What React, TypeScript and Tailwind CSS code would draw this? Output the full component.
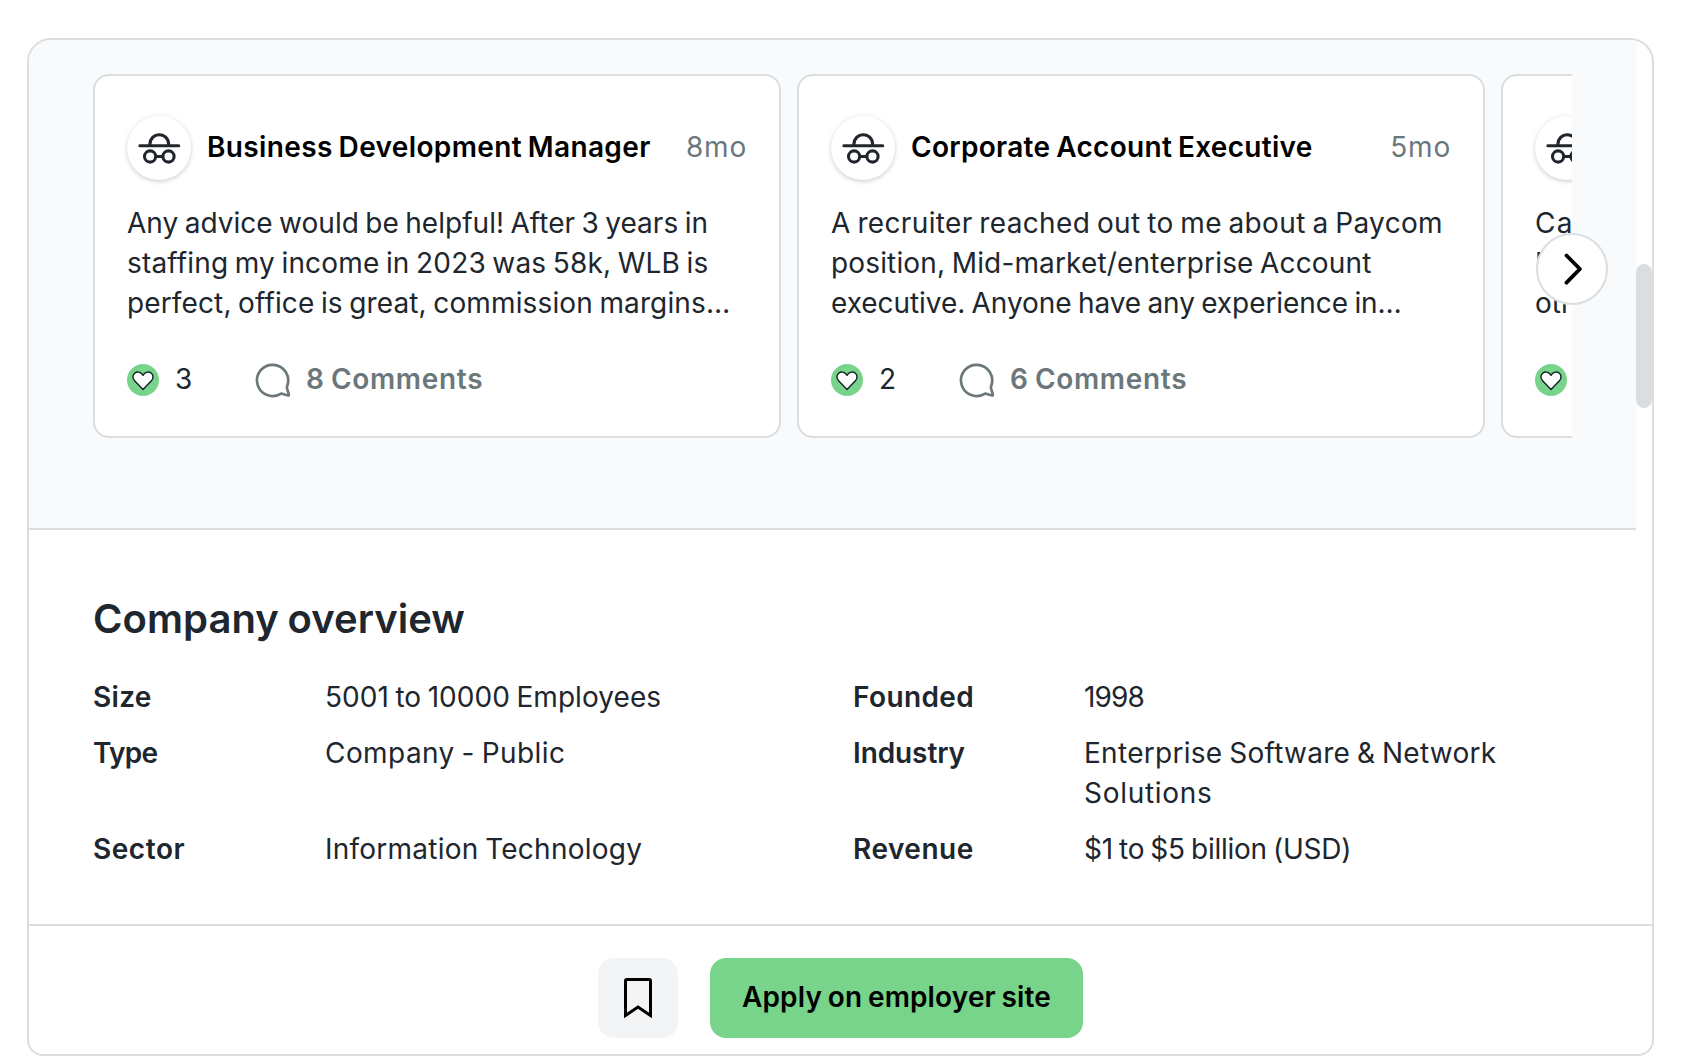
import React from 'react';

interface Line {
  text: string;
  className?: string;
}

interface Post {
  role: string;
  roleClass?: string;
  age: string;
  lines: Line[];
  likes: number;
  comments: number;
}

interface Fact {
  label: string;
  labelClass: string;
  lines: Line[];
}

const posts: Post[] = [
  {
    role: 'Business Development Manager',
    roleClass: 'tracking-[0.36px]',
    age: '8mo',
    lines: [
      { text: 'Any advice would be helpful! After 3 years in', className: 'tracking-[0.03px]' },
      { text: 'staffing my income in 2023 was 58k, WLB is', className: 'tracking-[0.16px]' },
      { text: 'perfect, office is great, commission margins…', className: 'tracking-[0.13px]' },
    ],
    likes: 3,
    comments: 8,
  },
  {
    role: 'Corporate Account Executive',
    roleClass: 'tracking-[0.3px]',
    age: '5mo',
    lines: [
      { text: 'A recruiter reached out to me about a Paycom', className: 'tracking-[0.35px]' },
      { text: 'position, Mid-market/enterprise Account', className: 'tracking-[0.15px]' },
      { text: 'executive. Anyone have any experience in…', className: 'tracking-[-0.05px]' },
    ],
    likes: 2,
    comments: 6,
  },
  {
    role: 'Account Executive',
    age: '1y',
    lines: [
      { text: 'Can anyone share what the', className: 'tracking-[1.2px]' },
      { text: 'Paycom interview is like and' },
      { text: 'other details on the role…' },
    ],
    likes: 4,
    comments: 5,
  },
];

const facts: Fact[] = [
  {
    label: 'Size',
    labelClass: 'tracking-[0.3px]',
    lines: [{ text: '5001 to 10000 Employees', className: 'tracking-[0.06px]' }],
  },
  {
    label: 'Founded',
    labelClass: 'tracking-[0.4px]',
    lines: [{ text: '1998', className: 'tracking-[-0.9px]' }],
  },
  {
    label: 'Type',
    labelClass: 'tracking-[-0.7px]',
    lines: [{ text: 'Company - Public', className: 'tracking-[0.43px]' }],
  },
  {
    label: 'Industry',
    labelClass: 'tracking-[-0.1px]',
    lines: [
      { text: 'Enterprise Software & Network', className: 'tracking-[0.29px]' },
      { text: 'Solutions', className: 'tracking-[0.7px]' },
    ],
  },
  {
    label: 'Sector',
    labelClass: 'tracking-[0.55px]',
    lines: [{ text: 'Information Technology', className: 'tracking-[0.24px]' }],
  },
  {
    label: 'Revenue',
    labelClass: 'tracking-[0.5px]',
    lines: [{ text: '$1 to $5 billion (USD)', className: 'tracking-[-0.24px]' }],
  },
];

const IncognitoIcon = () => (
  <svg viewBox="0 0 64 64" className="w-16 h-16" fill="none" stroke="#20262e" strokeWidth="3.1">
    <path d="M12.9 29.7H51.7" strokeLinecap="round" />
    <path d="M23 29.5V28a9.3 9.3 0 0 1 18.6 0V29.5" />
    <circle cx="23.1" cy="40.5" r="5.6" />
    <circle cx="41.5" cy="40.5" r="5.6" />
    <path d="M28.7 40.5H35.9" />
  </svg>
);

const LikeIcon = () => (
  <svg viewBox="0 0 32 32" className="w-8 h-8 shrink-0">
    <circle cx="16" cy="16" r="16" fill="#78d48b" />
    <path
      d="M16 25.4L7.6 16.8C5.4 14.5 5.5 11.2 7.6 9.3C9.8 7.4 13 7.8 14.7 9.8L16 11.3L17.3 9.8C19 7.8 22.2 7.4 24.4 9.3C26.5 11.2 26.6 14.5 24.4 16.8Z"
      fill="#fff"
      stroke="#15202a"
      strokeWidth="1.4"
      strokeLinejoin="round"
    />
  </svg>
);

const CommentIcon = () => (
  <svg viewBox="0 0 36 36" className="w-9 h-9 shrink-0" fill="none" stroke="#6c777c" strokeWidth="2.7">
    <path
      d="M32 24.4A15.6 15.6 0 1 0 25.6 31.8C28 31 29.6 33.6 33.8 33.3C33.9 29.6 31.4 28 32 24.4Z"
      strokeLinejoin="round"
    />
  </svg>
);

const PostCard: React.FC<{ post: Post }> = ({ post }) => (
  <div className="w-[688px] h-[364px] shrink-0 bg-white border-2 border-[#dadee1] rounded-2xl px-8 pt-10">
    <div className="flex items-center">
      <div className="w-16 h-16 shrink-0 rounded-full bg-white shadow-[0_2px_4px_rgba(32,38,46,0.16),0_0_6px_rgba(32,38,46,0.06)]">
        <IncognitoIcon />
      </div>
      <h3 className={`ml-4 pb-0.5 font-semibold text-black ${post.roleClass ?? ''}`}>{post.role}</h3>
      <span className="ml-auto pb-0.5 text-[#6c777c] tracking-[0.8px]">{post.age}</span>
    </div>
    <div className="mt-[23px]">
      {post.lines.map((line) => (
        <p key={line.text} className={`whitespace-nowrap ${line.className ?? ''}`}>
          {line.text}
        </p>
      ))}
    </div>
    <div className="mt-9 flex items-start">
      <div className="h-[42px] flex items-center">
        <LikeIcon />
      </div>
      <span className="ml-4 w-20">{post.likes}</span>
      <div className="h-[42px] flex items-center">
        <CommentIcon />
      </div>
      <span className="ml-[15px] font-semibold tracking-[0.7px] text-[#6c777c]">
        {post.comments} Comments
      </span>
    </div>
  </div>
);

const App: React.FC = () => {
  return (
    <div className="h-[1056px] overflow-hidden bg-white pt-[38px] pl-[27px] font-['Inter',sans-serif] text-[28px] leading-10 [word-spacing:-1.5px] text-[#20262e]">
      <div className="w-[1627px] h-[1018px] flex flex-col overflow-hidden border-2 border-[#dadee1] rounded-t-3xl rounded-b-2xl">
        <div className="h-[884px] flex">
          <div className="w-[1607px] shrink-0">
            {/* Community posts */}
            <section className="relative h-[490px] bg-[#f8fafc] border-b-2 border-[#dadee1] pt-[34px] pl-16">
              <div className="w-[1479px] flex gap-4 overflow-hidden">
                {posts.map((post) => (
                  <PostCard key={post.role} post={post} />
                ))}
              </div>
              <button
                aria-label="Next posts"
                className="absolute top-[193px] left-[1507px] w-[72px] h-[72px] flex items-center justify-center rounded-full bg-white border-2 border-[#dadee1]"
              >
                <svg viewBox="0 0 72 72" className="w-[72px] h-[72px] shrink-0" fill="none" stroke="#000" strokeWidth="3.8">
                  <path d="M30.5 22.5L43.9 36L30.5 49.7" strokeLinecap="round" strokeLinejoin="round" />
                </svg>
              </button>
            </section>

            {/* Company overview */}
            <section className="pt-[65px] pl-16">
              <h2 className="text-[40px] leading-[48px] font-semibold tracking-[0.05px]">Company overview</h2>
              <div className="mt-[34px] grid grid-cols-[232px_528px_231px_1fr] gap-y-4">
                {facts.map((fact) => (
                  <React.Fragment key={fact.label}>
                    <span className={`font-semibold ${fact.labelClass}`}>{fact.label}</span>
                    <div>
                      {fact.lines.map((line) => (
                        <p key={line.text} className={line.className}>
                          {line.text}
                        </p>
                      ))}
                    </div>
                  </React.Fragment>
                ))}
              </div>
            </section>
          </div>

          {/* Scrollbar */}
          <div className="w-4 pt-56">
            <div className="h-36 rounded-full bg-[#dadee1]" />
          </div>
        </div>

        {/* Footer actions */}
        <div className="flex-1 flex justify-center gap-8 pt-8 border-t-2 border-[#dadee1]">
          <button aria-label="Save job" className="w-20 h-20 rounded-2xl bg-[#f2f4f5]">
            <svg viewBox="0 0 80 80" className="w-20 h-20" fill="none" stroke="#000" strokeWidth="3">
              <path d="M27.5 57.5V23a1.5 1.5 0 0 1 1.5-1.5H51a1.5 1.5 0 0 1 1.5 1.5V57.5L40 49Z" />
            </svg>
          </button>
          <button className="w-[373px] h-20 pb-0.5 rounded-2xl bg-[#78d48b] font-semibold text-black [word-spacing:-1.5px] tracking-[0.15px]">
            Apply on employer site
          </button>
        </div>
      </div>
    </div>
  );
};

export default App;
